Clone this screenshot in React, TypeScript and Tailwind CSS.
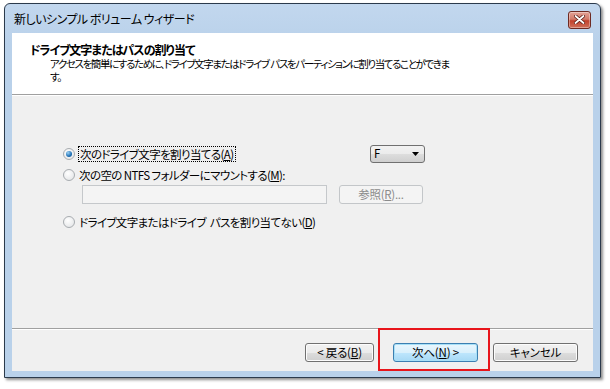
import React from "react";

const FONT = "font-['Noto_Sans_CJK_JP','Noto_Sans',sans-serif]";

function Radio({ checked }: { checked?: boolean }) {
  return (
    <span className="flex h-[12px] w-[12px] flex-none items-center justify-center rounded-full border border-[#a8acb0] bg-[radial-gradient(circle_at_40%_35%,#ffffff,#dfe1e3)]">
      {checked && (
        <span className="h-[6px] w-[6px] rounded-full bg-[radial-gradient(circle_at_35%_30%,#9cd2f5,#1f6fb4_60%,#0d4a87)]" />
      )}
    </span>
  );
}

function Btn({
  children,
  w,
  def,
  disabled,
}: {
  children: React.ReactNode;
  w: string;
  def?: boolean;
  disabled?: boolean;
}) {
  if (disabled) {
    return (
      <div className={`${w} flex h-[19px] items-center justify-center rounded-[3px] border border-[#c3c6c9] bg-[#f4f4f4] text-[11.5px] tracking-[-0.3px] text-[#8b8b8b]`}>
        {children}
      </div>
    );
  }
  return (
    <div
      className={`${w} flex h-[19px] items-center justify-center rounded-[3px] border text-[11.5px] tracking-[-0.2px] text-black ${
        def
          ? "border-[#3c7fb1] bg-[linear-gradient(#eaf6fd_0%,#d9f0fc_50%,#bee6fd_51%,#a7d9f5_100%)] shadow-[inset_0_0_0_1px_#a8e0f7]"
          : "border-[#707070] bg-[linear-gradient(#f2f2f2_0%,#ebebeb_50%,#dddddd_51%,#cfcfcf_100%)] shadow-[inset_0_0_0_1px_#fcfcfc]"
      }`}
    >
      {children}
    </div>
  );
}

export default function App() {
  return (
    <div className={`relative h-[389px] w-[610px] overflow-hidden bg-white ${FONT} [font-feature-settings:'palt']`}>
      {/* window */}
      <div className="ml-[4px] mt-[3px] flex h-[375px] w-[597px] flex-col rounded-t-[6px] border border-[#2b3a4c] bg-[linear-gradient(#c2d7ee,#b9d1ea_40px)] shadow-[2px_2px_3px_rgba(0,0,0,0.45)]">
        {/* title bar */}
        <div className="flex h-[29px] items-center justify-between pl-[9px] pr-[9px]">
          <span className="text-[12px] leading-none tracking-[-0.5px] text-black">新しいシンプル ボリューム ウィザード</span>
          <div className="mt-[2px] flex h-[18px] w-[23px] items-center justify-center rounded-[3px] border border-[#6e2a22] bg-[linear-gradient(#e3a397_0%,#d27a69_45%,#c2412c_55%,#d0705a_100%)] shadow-[inset_0_0_0_1px_rgba(255,255,255,0.35)]">
            <svg width="11" height="9" viewBox="0 0 11 9">
              <path d="M1.5 1 L9.5 8 M9.5 1 L1.5 8" stroke="#5a1c14" strokeWidth="3.4" strokeLinecap="round" />
              <path d="M1.5 1 L9.5 8 M9.5 1 L1.5 8" stroke="#ffffff" strokeWidth="1.8" strokeLinecap="round" />
            </svg>
          </div>
        </div>

        {/* inner panel */}
        <div className="mx-[7px] mb-[6px] flex flex-1 flex-col bg-[#f0f0f0]">
          {/* header */}
          <div className="h-[61px] bg-white pl-[18px] pt-[10px]">
            <div className="text-[12px] font-bold leading-[14px] tracking-[-1px] text-black">ドライブ文字またはパスの割り当て</div>
            <div className="pl-[20px] text-[10.5px] leading-[13px] tracking-[-1.4px] text-black">
              アクセスを簡単にするために、ドライブ文字またはドライブ&nbsp; パスをパーティションに割り当てることができま
              <br />
              す。
            </div>
          </div>
          <div className="h-px bg-[#a0a0a0]" />
          <div className="h-px bg-white" />

          {/* body */}
          <div className="flex-1 pt-[49px] text-[11.5px] tracking-[-0.6px] text-black">
            <div className="flex h-[18px] items-center pl-[51px]">
              <div className="flex w-[307px] items-center gap-[3px]">
                <Radio checked />
                <span className="border border-dotted border-black px-px leading-[14px]">
                  次のドライブ文字を割り当てる(<span className="underline">A</span>)
                </span>
              </div>
              <div className="flex h-[18px] w-[55px] items-center justify-between rounded-[3px] border border-[#707070] bg-[linear-gradient(#f2f2f2_0%,#ebebeb_50%,#dddddd_51%,#cfcfcf_100%)] pl-[3px] pr-[5px]">
                <span className="text-[11.5px] leading-none">F</span>
                <svg width="7" height="4" viewBox="0 0 7 4">
                  <path d="M0 0 H7 L3.5 4 Z" fill="#000" />
                </svg>
              </div>
            </div>

            <div className="mt-[5px] flex h-[14px] items-center gap-[4px] pl-[51px]">
              <Radio />
              <span className="leading-[14px]">
                次の空の NTFS フォルダーにマウントする(<span className="underline">M</span>):
              </span>
            </div>

            <div className="mt-[3px] flex items-center gap-[12px] pl-[70px]">
              <div className="h-[19px] w-[245px] border border-[#c5c8cb] bg-[#f4f4f4]" />
              <Btn w="w-[84px]" disabled>
                参照(<span className="underline">R</span>)...
              </Btn>
            </div>

            <div className="mt-[11px] flex h-[14px] items-center gap-[4px] pl-[51px]">
              <Radio />
              <span className="leading-[14px]">
                ドライブ文字またはドライブ&nbsp; パスを割り当てない(<span className="underline">D</span>)
              </span>
            </div>
          </div>

          <div className="h-px bg-[#a0a0a0]" />
          <div className="h-px bg-white" />

          {/* footer */}
          <div className="flex h-[41px] items-start justify-end pr-[15px] pt-[13px]">
            <Btn w="w-[69px]">
              &lt;&nbsp;戻る(<span className="underline">B</span>)
            </Btn>
            <div className="w-[19px]" />
            <Btn w="w-[85px]" def>
              次へ(<span className="underline">N</span>)&nbsp;&gt;
            </Btn>
            <div className="w-[15px]" />
            <Btn w="w-[85px]">キャンセル</Btn>
          </div>
        </div>
      </div>

      {/* red annotation box */}
      <div className="absolute left-[378px] top-[328px] h-[43px] w-[112px] border-2 border-[#e8151b]" />
    </div>
  );
}
